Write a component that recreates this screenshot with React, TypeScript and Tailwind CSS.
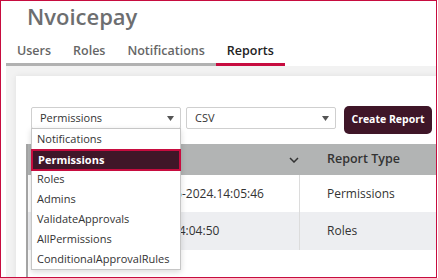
const options = [
  "Notifications",
  "Permissions",
  "Roles",
  "Admins",
  "ValidateApprovals",
  "AllPermissions",
  "ConditionalApprovalRules",
];

const tabs = ["Users", "Roles", "Notifications", "Reports"];

const rows = [
  { name: "Permissions-10-05-2024.14:05:46", type: "Permissions" },
  { name: "Roles-10-5-2024.14:04:50", type: "Roles" },
];

function Caret() {
  return (
    <svg width="7" height="5" viewBox="0 0 7 5" className="shrink-0">
      <polygon points="0,0 7,0 3.5,5" fill="#555" />
    </svg>
  );
}

function Select({ value, children }: { value: string; children?: React.ReactNode }) {
  return (
    <div className="relative w-[150px]">
      <div className="flex h-[22px] items-center justify-between rounded-[2px] border border-[#cfcfcf] bg-white pl-[8px] pr-[6px] text-[11px] text-[#333]">
        <span>{value}</span>
        <Caret />
      </div>
      {children}
    </div>
  );
}

export default function App() {
  return (
    <div className="relative h-[278px] w-[437px] overflow-hidden border border-[#c70c3f] bg-white font-['Open_Sans',sans-serif]">
      {/* Header */}
      <div className="pl-[26px] text-[22px] font-semibold leading-[30px] text-[#6d6e70]">Nvoicepay</div>

      {/* Tabs */}
      <div className="mt-[10px] flex pl-[5px]">
        {tabs.map((t) => (
          <div
            key={t}
            className={
              t === "Reports"
                ? "border-b-[3px] border-[#c70c3f] px-[11px] pb-[2px] text-[12.5px] font-semibold leading-[20px] text-[#222]"
                : "border-b-[3px] border-[#b1b1b1] px-[11px] pb-[2px] text-[12.5px] font-semibold leading-[20px] text-[#666]"
            }
          >
            {t}
          </div>
        ))}
      </div>

      {/* Content */}
      <div className="ml-[5px] h-[220px] bg-[#f2f2f2] pl-[10px] pt-[10px]">
        <div className="h-[220px] w-[480px] bg-white pl-[10px] pt-[30px] shadow-[0_0_6px_rgba(0,0,0,0.08)]">
          {/* Filters */}
          <div className="flex items-start pl-[5px]">
            <div className="mt-px">
              <Select value="Permissions">
                <div className="absolute left-0 top-[21px] z-20 w-[150px] border border-[#c6c6c6] bg-white text-[11px] text-[#333] shadow-[0_2px_6px_rgba(0,0,0,0.15)]">
                  {options.map((o) =>
                    o === "Permissions" ? (
                      <div
                        key={o}
                        className="relative z-10 -mx-px -mb-[2px] flex h-[22px] items-center border-2 border-[#c70c3f] bg-[#3f1628] pl-[5px] font-bold text-white"
                      >
                        {o}
                      </div>
                    ) : (
                      <div key={o} className="flex h-[20px] items-center pl-[5px]">
                        {o}
                      </div>
                    )
                  )}
                </div>
              </Select>
            </div>
            <div className="ml-[5px] mt-px">
              <Select value="CSV" />
            </div>
            <button className="ml-[8px] h-[28px] w-[88px] rounded-[5px] bg-[#3f1628] text-[10.5px] font-bold text-white">
              Create Report
            </button>
          </div>

          {/* Table */}
          <div className="mt-[10px] h-[200px] border-l-2 border-[#a6a6a6]">
            <div className="flex h-[31px] items-center bg-[#b2b4b4] text-[12.5px] font-semibold text-[#333]">
              <div className="flex w-[272px] items-center justify-between pl-[20px] pr-[1px]">
                <span>Report Name</span>
                <svg width="10" height="6" viewBox="0 0 10 6">
                  <path d="M1 1l4 4 4-4" fill="none" stroke="#333" strokeWidth="1.5" />
                </svg>
              </div>
              <div className="pl-[27px]">Report Type</div>
            </div>
            {rows.map((r, i) => (
              <div
                key={r.type}
                className={
                  i === 0
                    ? "flex h-[37px] items-center bg-white text-[12px] text-[#333]"
                    : "flex h-[38px] items-center bg-[#edeef1] text-[12px] text-[#333]"
                }
              >
                <div className="flex h-full w-[272px] items-center whitespace-pre border-r border-[#dcdcdc] pl-[51px]">{r.name}</div>
                <div className="pl-[27px]">{r.type}</div>
              </div>
            ))}
          </div>
        </div>
      </div>
    </div>
  );
}
